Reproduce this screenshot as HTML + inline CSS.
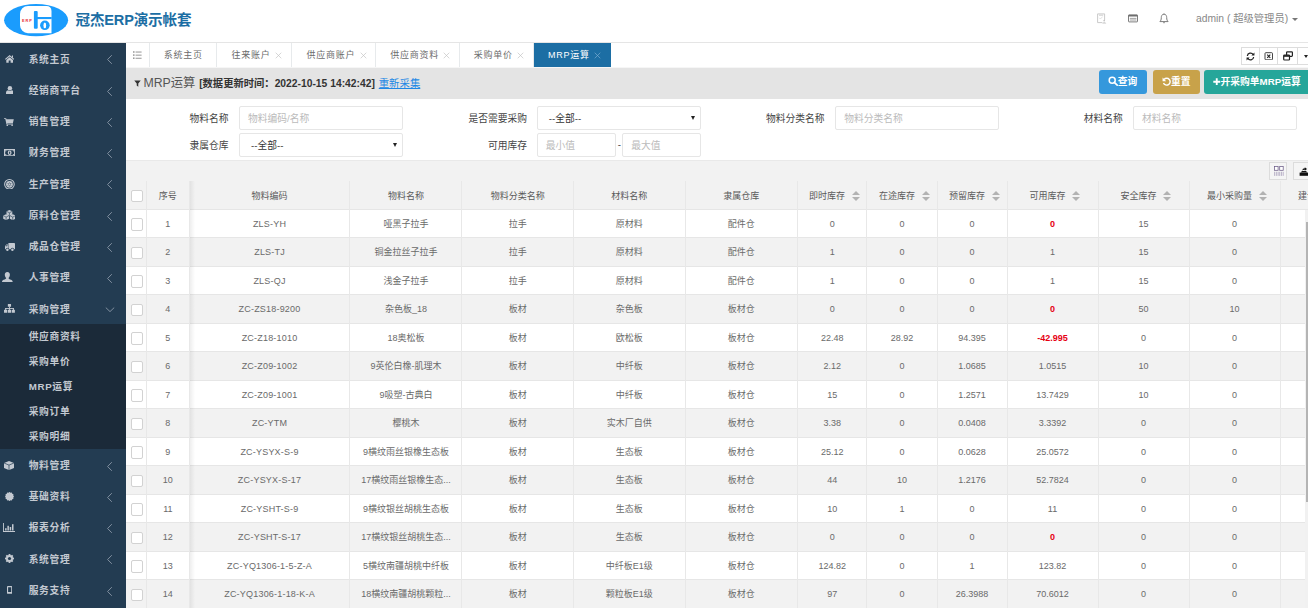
<!DOCTYPE html>
<html lang="zh-CN">
<head>
<meta charset="utf-8">
<title>冠杰ERP演示帐套</title>
<style>
*{box-sizing:border-box;margin:0;padding:0}
html,body{width:1308px;height:608px;overflow:hidden;background:#fff}
body{font-family:"Liberation Sans","Noto Sans CJK SC",sans-serif;font-size:9.75px;color:#676a6c;position:relative}
.abs{position:absolute}
/* header */
#hdr{position:absolute;left:0;top:0;width:1308px;height:43px;background:#fff;border-bottom:1px solid #e5e5e5}
#logo{position:absolute;left:3px;top:2px;width:66px;height:36px}
#title{position:absolute;left:75.5px;top:8.8px;height:22px;line-height:22px;font-size:14.6px;font-weight:bold;color:#1c6ea4;white-space:nowrap;letter-spacing:-0.2px}
#user{position:absolute;left:1196px;top:9.8px;height:18px;line-height:18px;font-size:10.3px;color:#888;white-space:nowrap}
/* sidebar */
#side{position:absolute;left:0;top:43px;width:125.5px;height:565px;background:#233c52}
.mi{position:absolute;left:0;width:125.5px;height:31.25px;line-height:31.25px;color:#c3c9d1;font-size:9.75px;letter-spacing:.65px;font-weight:bold;white-space:nowrap}
.mi .t{position:absolute;left:28.7px;top:0.3px}
.mi svg.ic{position:absolute;left:4px;top:9.6px;width:12px;height:12px}
.mi svg.ar{position:absolute;left:105px;top:11.1px;width:10px;height:11px}
#sub{position:absolute;left:0;top:281.4px;width:125.5px;height:124.8px;background:#1b2a39}
.si{position:absolute;left:28.7px;height:25px;line-height:25.6px;color:#c3c9d1;font-size:9.75px;letter-spacing:.65px;font-weight:bold;white-space:nowrap}
/* tabs */
#tabs{position:absolute;left:125.5px;top:43px;width:1183px;height:25px;background:#fff;border-bottom:1px solid #f6f6f6}
.tab{position:absolute;top:0;height:24px;line-height:25px;border-right:1px solid #e7eaec;color:#6c6c6c;font-size:9px;letter-spacing:.75px;white-space:nowrap;text-align:left;padding-left:14.2px}
.tab .x{display:inline-block;margin-left:4.5px;width:7px;height:7px;vertical-align:-1px}
.tab.act{background:#1c6ea4;color:#fff;border-right:none;height:23.5px}
#tabr{position:absolute;left:1241.1px;top:47px;width:70px;height:18px;border:1px solid #ddd;background:#fff}
#tabr div{position:absolute;top:0;height:16px;border-right:1px solid #ddd}
/* panel heading */
#ph{position:absolute;left:125.5px;top:68px;width:1183px;height:31px;background:#e4e4e4}
#ph .h{position:absolute;left:7px;top:-0.5px;height:32px;line-height:31px;white-space:nowrap;color:#444}
#ph .h b.t1{font-weight:normal;font-size:12.3px;color:#555;margin-left:11px;margin-right:1px}
#ph .h b.t2{font-size:10.3px;color:#333}
#ph .h a{font-size:10.4px;margin-left:1.2px;color:#1e88e5;text-decoration:underline}
.btn{position:absolute;top:1.7px;height:24.3px;line-height:24px;border-radius:3px;color:#fff;font-size:9.75px;text-align:center;white-space:nowrap;font-weight:bold}
/* form */
#form{position:absolute;left:125.5px;top:99px;width:1183px;height:61px;background:#fff}
.lb{position:absolute;height:24px;line-height:25.6px;font-size:9.75px;color:#444;text-align:right;width:100px;white-space:nowrap}
.ip{position:absolute;height:24px;line-height:23.4px;border:1px solid #e6e6e6;border-radius:2px;background:#fff;font-size:9.75px;color:#bbb;padding-left:8px;white-space:nowrap}
.ip.sel{color:#333;padding-left:11px}
.ip.sel:after{content:"";position:absolute;right:4.6px;top:8.6px;border:2.6px solid transparent;border-top:4.4px solid #222;}
/* table toolbar */
#tb{position:absolute;left:125.5px;top:160px;width:1183px;height:21.5px;background:#f2f2f2;border-top:1px solid #e9e9e9;border-bottom:1px solid #e6e6e6}
.tbi{position:absolute;top:1.3px;width:18px;height:17.4px;border:1px solid #dcdcdc;background:#f5f5f5}
/* table */
#tbl{position:absolute;left:126px;top:181.4px;width:1182px;height:427px;overflow:hidden}
.tr{position:absolute;left:0;width:1182px;height:28.5px;background:#fff;border-bottom:1px solid #e6e6e6}
.tr.even,.tr.th{background:#f2f2f2}
.c{position:absolute;top:0;height:28.5px;line-height:29.6px;text-align:center;border-right:1px solid #e8e8e8;font-size:9px;color:#6a6a6a;white-space:nowrap;overflow:hidden}
.th .c{color:#5a5a5a;line-height:31.4px}
.c.code{letter-spacing:.2px}
.c.red{color:#e60012;font-weight:bold}
.cb{position:absolute;left:4.5px;top:8.5px;width:12.5px;height:12.5px;border:1px solid #d2d2d2;border-radius:2px;background:#fff}
.c.hs{padding-left:5px}
.sort{display:inline-block;position:relative;width:8.4px;height:10px;margin-left:6.8px;vertical-align:-1.6px}
.sort i{position:absolute;left:0;border:4.2px solid transparent}
.sort i.up{top:0.2px;border-bottom:4px solid #b2b2b2;border-top:none}
.sort i.dn{top:5.7px;border-top:4px solid #b2b2b2;border-bottom:none}
#fixshadow{position:absolute;left:189.5px;top:181px;width:5px;height:427px;background:linear-gradient(to right,rgba(0,0,0,.065),rgba(0,0,0,0))}
#vsb{position:absolute;left:1305.2px;top:209.8px;width:3px;height:399px;background:#f1f1f1}
#vsb i{position:absolute;left:1.3px;top:12.2px;width:2px;height:280px;background:#b4b4b4}
</style>
</head>
<body>
<!-- HEADER -->
<div id="hdr">
  <svg id="logo" viewBox="0 0 66 36">
    <ellipse cx="33.1" cy="18.2" rx="32" ry="16.1" fill="#1a9cfd"/>
    <path d="M25 3.9 H43.5 A5 5 0 0 1 48.5 8.9 V31.2 H25 A8 8 0 0 1 17 23.2 V11.9 A8 8 0 0 1 25 3.9 Z" fill="#fff"/>
    <text x="18.9" y="20" font-family="Liberation Sans, sans-serif" font-size="3.9" font-weight="bold" letter-spacing="0.95" fill="#e8303a">ERP</text>
    <rect x="30.9" y="9" width="3.8" height="17.8" rx="1" fill="#1a9cfd"/>
    <rect x="31.5" y="15" width="17.2" height="2.1" fill="#1a9cfd"/>
    <circle cx="41.9" cy="23.3" r="4.8" fill="#1a9cfd"/>
    <ellipse cx="41.8" cy="23.4" rx="1.35" ry="2.9" fill="#fff"/>
  </svg>
  <div id="title">冠杰ERP演示帐套</div>
  <div id="user">admin ( 超级管理员)</div>
  <svg class="abs" style="left:1097px;top:13px;width:10px;height:11px" viewBox="0 0 10 11"><path d="M0.6 0.9 H7.6 V7 M5.4 9.6 H0.6 V0.9" fill="none" stroke="#c4c4c4" stroke-width="0.9"/><path d="M2 2.2 H6.2" stroke="#c4c4c4" stroke-width="0.8"/><path d="M2.2 4.8 L3.4 6 L5.6 3.6" fill="none" stroke="#d5d5d5" stroke-width="0.7"/><circle cx="7.2" cy="7.6" r="0.9" fill="#c4c4c4"/><path d="M5.2 10.4 Q7.2 8 9.4 10.4 Z" fill="#c4c4c4"/></svg>
  <svg class="abs" style="left:1128px;top:14px;width:10px;height:9px" viewBox="0 0 10 9"><rect x="0.5" y="0.9" width="9" height="7" rx="0.5" fill="none" stroke="#6e6e6e" stroke-width="0.9"/><rect x="0.5" y="0.9" width="9" height="1.6" fill="#6e6e6e"/><rect x="1.8" y="3.9" width="6.6" height="0.8" fill="#8a8a8a"/><rect x="1.8" y="5.6" width="6.6" height="0.8" fill="#8a8a8a"/></svg>
  <svg class="abs" style="left:1158.9px;top:12.5px;width:10px;height:12px" viewBox="0 0 10 12"><path d="M5 1.2 C2.9 1.2 2.3 3 2.3 4.6 C2.3 6.8 1.7 7.8 0.9 8.6 H9.1 C8.3 7.8 7.7 6.8 7.7 4.6 C7.7 3 7.1 1.2 5 1.2 Z" fill="none" stroke="#7c7c7c" stroke-width="1" stroke-linejoin="round"/><path d="M4 9.3 Q5 10.8 6 9.3" fill="none" stroke="#8c8c8c" stroke-width="0.9"/><path d="M5 0.4 V1.2" stroke="#8c8c8c" stroke-width="0.9"/></svg>
  <div class="abs" style="left:1291.8px;top:17.5px;border:3px solid transparent;border-top:3.2px solid #777;border-bottom:none"></div>
</div>

<!-- SIDEBAR -->
<div id="side">
<svg viewBox="0 0 9.3 7.8" style="position:absolute;left:4.8px;top:12px;width:9.3px;height:7.8px"><g fill="#c3c9d1"><path d="M4.65 0 L9.3 3.9 L8.6 4.7 L4.65 1.4 L0.7 4.7 L0 3.9 Z"/><path d="M4.65 2.2 L8 5 V7.8 H5.6 V5.4 H3.7 V7.8 H1.3 V5 Z"/><rect x="6.9" y="0.5" width="1.1" height="2.2"/></g></svg>
<div class="mi" style="top:0.3px"><span class="t">系统主页</span><svg class="ar" viewBox="0 0 10 11"><path d="M6.8 1.2 L2.6 5.5 L6.8 9.8" fill="none" stroke="#8b98a8" stroke-width="0.9"/></svg></div>
<svg viewBox="0 0 7.8 8.7" style="position:absolute;left:5.6px;top:42.8px;width:7.8px;height:8.7px"><g fill="#c3c9d1"><circle cx="3.9" cy="2.3" r="2.25"/><path d="M0 8.2 V6.6 Q0 4.6 2 4.2 Q3.9 5.6 5.8 4.2 Q7.8 4.6 7.8 6.6 V8.2 Q7.8 8.7 7.2 8.7 H0.6 Q0 8.7 0 8.2 Z"/></g></svg>
<div class="mi" style="top:31.55px"><span class="t">经销商平台</span><svg class="ar" viewBox="0 0 10 11"><path d="M6.8 1.2 L2.6 5.5 L6.8 9.8" fill="none" stroke="#8b98a8" stroke-width="0.9"/></svg></div>
<svg viewBox="0 0 9.8 8.1" style="position:absolute;left:4.3px;top:75px;width:9.8px;height:8.1px"><g fill="#c3c9d1"><path d="M0 0.2 H2.1 L2.5 1.2 H9.8 L8.9 4.9 H3.2 L3.4 5.6 H9 V6.5 H2.5 L1.3 1.1 H0 Z"/><circle cx="3.3" cy="7.3" r="0.8"/><circle cx="8.1" cy="7.3" r="0.8"/></g></svg>
<div class="mi" style="top:62.8px"><span class="t">销售管理</span><svg class="ar" viewBox="0 0 10 11"><path d="M6.8 1.2 L2.6 5.5 L6.8 9.8" fill="none" stroke="#8b98a8" stroke-width="0.9"/></svg></div>
<svg viewBox="0 0 11.3 7.5" style="position:absolute;left:3.7px;top:105.8px;width:11.3px;height:7.5px"><g fill="#c3c9d1"><path d="M0 0 H11.3 V7.5 H0 Z M1.2 1.2 V6.3 H10.1 V1.2 Z" fill-rule="evenodd"/><path d="M5.65 1.5 A1.9 2.25 0 1 0 5.65 6 A1.9 2.25 0 1 0 5.65 1.5 Z M5.65 2.4 A0.6 1.35 0 1 1 5.65 5.1 A0.6 1.35 0 1 1 5.65 2.4 Z" fill-rule="evenodd"/><path d="M1.2 1.2 H2.6 A1.4 1.4 0 0 1 1.2 2.6 Z M10.1 1.2 V2.6 A1.4 1.4 0 0 1 8.7 1.2 Z M1.2 6.3 V4.9 A1.4 1.4 0 0 1 2.6 6.3 Z M10.1 6.3 H8.7 A1.4 1.4 0 0 1 10.1 4.9 Z"/></g></svg>
<div class="mi" style="top:94.05px"><span class="t">财务管理</span><svg class="ar" viewBox="0 0 10 11"><path d="M6.8 1.2 L2.6 5.5 L6.8 9.8" fill="none" stroke="#8b98a8" stroke-width="0.9"/></svg></div>
<svg viewBox="0 0 10.9 10.7" style="position:absolute;left:4.1px;top:135.7px;width:10.9px;height:10.7px"><g fill="#c3c9d1"><circle cx="5.45" cy="5.35" r="4.8" fill="none" stroke="#c3c9d1" stroke-width="1.1"/><circle cx="5.45" cy="5.35" r="3.35"/><g fill="#233c52"><polygon points="5.45,2.65 5.90,4.57 7.79,4.00 6.35,5.35 7.79,6.70 5.90,6.13 5.45,8.05 5.00,6.13 3.11,6.70 4.55,5.35 3.11,4.00 5.00,4.57"/></g><circle cx="5.45" cy="5.35" r="1.1" /></g></svg>
<div class="mi" style="top:125.3px"><span class="t">生产管理</span><svg class="ar" viewBox="0 0 10 11"><path d="M6.8 1.2 L2.6 5.5 L6.8 9.8" fill="none" stroke="#8b98a8" stroke-width="0.9"/></svg></div>
<svg viewBox="0 0 12.8 10.2" style="position:absolute;left:2.7px;top:167px;width:12.8px;height:10.2px"><g fill="#c3c9d1"><polygon points="6.4,0 9.3,1.305 9.3,4.408 6.4,5.8 3.5,4.408 3.5,1.305"/><path d="M6.4 2.8 V5.8 M6.4 2.8 L3.5 1.305 M6.4 2.8 L9.3 1.305" stroke="#233c52" stroke-width="0.6" fill="none"/><polygon points="3.1,4.3 6,5.605 6,8.708 3.1,10.1 0.2,8.708 0.2,5.605"/><path d="M3.1 7.1 V10.1 M3.1 7.1 L0.2 5.605 M3.1 7.1 L6 5.605" stroke="#233c52" stroke-width="0.6" fill="none"/><polygon points="9.7,4.3 12.6,5.605 12.6,8.708 9.7,10.1 6.8,8.708 6.8,5.605"/><path d="M9.7 7.1 V10.1 M9.7 7.1 L6.8 5.605 M9.7 7.1 L12.6 5.605" stroke="#233c52" stroke-width="0.6" fill="none"/></g></svg>
<div class="mi" style="top:156.55px"><span class="t">原料仓管理</span><svg class="ar" viewBox="0 0 10 11"><path d="M6.8 1.2 L2.6 5.5 L6.8 9.8" fill="none" stroke="#8b98a8" stroke-width="0.9"/></svg></div>
<svg viewBox="0 0 10 8.1" style="position:absolute;left:4.5px;top:199.8px;width:10px;height:8.1px"><g fill="#c3c9d1"><rect x="3.4" y="0" width="6.6" height="6.2" rx="0.4"/><path d="M0 3.3 L1.3 1.5 H3 V6.2 H0 Z"/><path d="M0.8 3.3 L1.7 2.1 H2.4 V3.3 Z" fill="#233c52"/><circle cx="2.4" cy="6.6" r="1.75" fill="#233c52"/><circle cx="7.4" cy="6.6" r="1.75" fill="#233c52"/><circle cx="2.4" cy="6.7" r="1.25"/><circle cx="7.4" cy="6.7" r="1.25"/></g></svg>
<div class="mi" style="top:187.8px"><span class="t">成品仓管理</span><svg class="ar" viewBox="0 0 10 11"><path d="M6.8 1.2 L2.6 5.5 L6.8 9.8" fill="none" stroke="#8b98a8" stroke-width="0.9"/></svg></div>
<svg viewBox="0 0 10.7 10.3" style="position:absolute;left:2.4px;top:228.9px;width:10.7px;height:10.3px"><g fill="#c3c9d1"><path d="M5.35 0 C7.3 0 7.9 1.5 7.9 2.8 C7.9 4.3 7.1 5.6 6.5 6 C6.5 7 7.5 7.2 9.1 7.8 C10.5 8.3 10.7 9.2 10.7 10.3 H0 C0 9.2 0.2 8.3 1.6 7.8 C3.2 7.2 4.2 7 4.2 6 C3.6 5.6 2.8 4.3 2.8 2.8 C2.8 1.5 3.4 0 5.35 0 Z"/></g></svg>
<div class="mi" style="top:219.05px"><span class="t">人事管理</span><svg class="ar" viewBox="0 0 10 11"><path d="M6.8 1.2 L2.6 5.5 L6.8 9.8" fill="none" stroke="#8b98a8" stroke-width="0.9"/></svg></div>
<svg viewBox="0 0 10.9 8.7" style="position:absolute;left:4.1px;top:261.4px;width:10.9px;height:8.7px"><g fill="#c3c9d1"><rect x="3.85" y="0" width="3.2" height="2.7" rx="0.3"/><rect x="5" y="2.5" width="0.9" height="2"/><rect x="1.2" y="4" width="8.5" height="0.9"/><rect x="1.2" y="4" width="0.9" height="2"/><rect x="9.0" y="4" width="0.9" height="2"/><rect x="5" y="4" width="0.9" height="2"/><rect x="0" y="5.7" width="3.2" height="3" rx="0.3"/><rect x="3.85" y="5.7" width="3.2" height="3" rx="0.3"/><rect x="7.7" y="5.7" width="3.2" height="3" rx="0.3"/></g></svg>
<div class="mi" style="top:250.3px"><span class="t">采购管理</span><svg class="ar" viewBox="0 0 10 11"><path d="M0.8 3.6 L5 7.6 L9.2 3.6" fill="none" stroke="#8b98a8" stroke-width="0.9"/></svg></div>
<svg viewBox="0 0 10 9.1" style="position:absolute;left:4.1px;top:417.8px;width:10px;height:9.1px"><g fill="#c3c9d1"><polygon points="5,0 10,2 10,6.9 5,9.1 0,6.9 0,2"/><path d="M5 4.1 V9.1 M5 4.1 L0 2 M5 4.1 L10 2" stroke="#233c52" stroke-width="0.7" fill="none"/></g></svg>
<div class="mi" style="top:406.55px"><span class="t">物料管理</span><svg class="ar" viewBox="0 0 10 11"><path d="M6.8 1.2 L2.6 5.5 L6.8 9.8" fill="none" stroke="#8b98a8" stroke-width="0.9"/></svg></div>
<svg viewBox="0 0 9 9" style="position:absolute;left:5px;top:448.6px;width:9px;height:9px"><g fill="#c3c9d1"><polygon points="4.50,-0.10 5.51,0.73 6.80,0.52 7.26,1.74 8.48,2.20 8.27,3.49 9.10,4.50 8.27,5.51 8.48,6.80 7.26,7.26 6.80,8.48 5.51,8.27 4.50,9.10 3.49,8.27 2.20,8.48 1.74,7.26 0.52,6.80 0.73,5.51 -0.10,4.50 0.73,3.49 0.52,2.20 1.74,1.74 2.20,0.52 3.49,0.73"/></g></svg>
<div class="mi" style="top:437.8px"><span class="t">基础资料</span><svg class="ar" viewBox="0 0 10 11"><path d="M6.8 1.2 L2.6 5.5 L6.8 9.8" fill="none" stroke="#8b98a8" stroke-width="0.9"/></svg></div>
<svg viewBox="0 0 12 9" style="position:absolute;left:3px;top:479.95px;width:12px;height:9px"><g fill="#c3c9d1"><path d="M0 0 H0.9 V8.1 H12 V9 H0 Z"/><rect x="2.1" y="5.2" width="1.5" height="2.3"/><rect x="4.4" y="2.8" width="1.5" height="4.7"/><rect x="6.7" y="4" width="1.5" height="3.5"/><rect x="9" y="1.2" width="1.5" height="6.3"/></g></svg>
<div class="mi" style="top:469.05px"><span class="t">报表分析</span><svg class="ar" viewBox="0 0 10 11"><path d="M6.8 1.2 L2.6 5.5 L6.8 9.8" fill="none" stroke="#8b98a8" stroke-width="0.9"/></svg></div>
<svg viewBox="0 0 9 9" style="position:absolute;left:4.8px;top:511.35px;width:9px;height:9px"><g fill="#c3c9d1"><rect x="3.6" y="0" width="1.8" height="9" transform="rotate(0 4.5 4.5)"/><rect x="3.6" y="0" width="1.8" height="9" transform="rotate(45 4.5 4.5)"/><rect x="3.6" y="0" width="1.8" height="9" transform="rotate(90 4.5 4.5)"/><rect x="3.6" y="0" width="1.8" height="9" transform="rotate(135 4.5 4.5)"/><circle cx="4.5" cy="4.5" r="3.5"/><circle cx="4.5" cy="4.5" r="1.6" fill="#233c52"/></g></svg>
<div class="mi" style="top:500.3px"><span class="t">系统管理</span><svg class="ar" viewBox="0 0 10 11"><path d="M6.8 1.2 L2.6 5.5 L6.8 9.8" fill="none" stroke="#8b98a8" stroke-width="0.9"/></svg></div>
<svg viewBox="0 0 5.3 7.8" style="position:absolute;left:6.8px;top:542.95px;width:5.3px;height:7.8px"><g fill="#c3c9d1"><path d="M0.9 0 H4.4 Q5.3 0 5.3 0.9 V6.9 Q5.3 7.8 4.4 7.8 H0.9 Q0 7.8 0 6.9 V0.9 Q0 0 0.9 0 Z M1.1 1.3 V6 H4.2 V1.3 Z" fill-rule="evenodd"/></g></svg>
<div class="mi" style="top:531.55px"><span class="t">服务支持</span><svg class="ar" viewBox="0 0 10 11"><path d="M6.8 1.2 L2.6 5.5 L6.8 9.8" fill="none" stroke="#8b98a8" stroke-width="0.9"/></svg></div>
<div id="sub" style="top:281.3px"><div class="si" style="top:0px">供应商资料</div><div class="si" style="top:24.85px">采购单价</div><div class="si" style="top:49.7px">MRP运算</div><div class="si" style="top:74.55px">采购订单</div><div class="si" style="top:99.4px">采购明细</div></div>
</div>

<!-- TABS -->
<div id="tabs">
<div class="tab" style="left:0.5px;width:23.5px"><svg viewBox="0 0 10 10" style="position:absolute;left:7.3px;top:7.6px;width:8.6px;height:8.6px"><g fill="#858585"><rect x="0" y="0.4" width="1.8" height="1.5"/><rect x="0" y="4" width="1.8" height="1.5"/><rect x="0" y="7.6" width="1.8" height="1.5"/><rect x="3" y="0.7" width="7" height="1"/><rect x="3" y="4.3" width="7" height="1"/><rect x="3" y="7.9" width="7" height="1"/></g></svg></div>
<div class="tab" style="left:24px;width:67.9px">系统主页</div>
<div class="tab" style="left:91.9px;width:74.8px">往来账户<svg class="x" viewBox="0 0 8 8"><path d="M0.8 0.8 L7.2 7.2 M7.2 0.8 L0.8 7.2" stroke="#c2c2c2" stroke-width="0.75" fill="none"/></svg></div>
<div class="tab" style="left:166.7px;width:83.8px">供应商账户<svg class="x" viewBox="0 0 8 8"><path d="M0.8 0.8 L7.2 7.2 M7.2 0.8 L0.8 7.2" stroke="#c2c2c2" stroke-width="0.75" fill="none"/></svg></div>
<div class="tab" style="left:250.5px;width:83.5px">供应商资料<svg class="x" viewBox="0 0 8 8"><path d="M0.8 0.8 L7.2 7.2 M7.2 0.8 L0.8 7.2" stroke="#c2c2c2" stroke-width="0.75" fill="none"/></svg></div>
<div class="tab" style="left:334px;width:74.25px">采购单价<svg class="x" viewBox="0 0 8 8"><path d="M0.8 0.8 L7.2 7.2 M7.2 0.8 L0.8 7.2" stroke="#c2c2c2" stroke-width="0.75" fill="none"/></svg></div>
<div class="tab act" style="left:408.25px;width:77.25px">MRP运算<svg class="x" viewBox="0 0 8 8"><path d="M0.8 0.8 L7.2 7.2 M7.2 0.8 L0.8 7.2" stroke="#7fb0d2" stroke-width="0.75" fill="none"/></svg></div>
</div>
<div id="tabr">
  <div style="left:0;width:17.8px"><svg viewBox="0 0 10 10" style="position:absolute;left:4.2px;top:3.6px;width:9px;height:9px"><path d="M1.5 4.4 A3.5 3.5 0 0 1 8 3" fill="none" stroke="#222" stroke-width="1.4"/><path d="M8.5 5.6 A3.5 3.5 0 0 1 2 7" fill="none" stroke="#222" stroke-width="1.4"/><path d="M9.4 0.6 V4 H6 Z" fill="#222"/><path d="M0.6 9.4 V6 H4 Z" fill="#222"/></svg></div>
  <div style="left:17.8px;width:18.2px"><svg viewBox="0 0 10 10" style="position:absolute;left:4.2px;top:3.8px;width:9.5px;height:8.5px"><rect x="0.6" y="0.8" width="8.8" height="8.4" rx="1" fill="none" stroke="#222" stroke-width="1"/><path d="M3.2 3.2 L6.8 6.8 M6.8 3.2 L3.2 6.8" stroke="#222" stroke-width="1.3"/></svg></div>
  <div style="left:36px;width:19.5px"><svg viewBox="0 0 10 10" style="position:absolute;left:4.5px;top:3.2px;width:10px;height:10px"><rect x="3.6" y="0.8" width="5.8" height="4.6" rx="0.8" fill="none" stroke="#222" stroke-width="1.2"/><rect x="0.7" y="4.2" width="5.8" height="4.8" rx="0.8" fill="#fff" stroke="#222" stroke-width="1.2"/><rect x="0.7" y="4.2" width="5.8" height="1.6" fill="#222"/></svg></div>
  <div style="left:55.5px;width:14px;border-right:none"><i style="position:absolute;left:6px;top:7px;border:2.6px solid transparent;border-top:3px solid #222;border-bottom:none"></i></div>
</div>

<!-- PANEL HEADING -->
<div id="ph">
  <div class="h"><svg viewBox="0 0 8 8" style="position:absolute;left:1px;top:12.5px;width:7px;height:7px"><path d="M0.3 0.6 H7.7 L4.9 3.9 V7.6 L3.1 6.3 V3.9 Z" fill="#333"/></svg><b class="t1">MRP运算</b> <b class="t2">[数据更新时间：2022-10-15 14:42:42]</b> <a>重新采集</a></div>
  <div class="btn" style="left:973.5px;width:47.8px;background:#3598dc"><svg viewBox="0 0 10 10" style="width:10px;height:10px;vertical-align:-1.6px;margin-left:-1px"><circle cx="4.2" cy="4.2" r="3" fill="none" stroke="#fff" stroke-width="1.5"/><path d="M6.3 6.3 L9.2 9.2" stroke="#fff" stroke-width="1.7" stroke-linecap="round"/></svg>查询</div>
  <div class="btn" style="left:1027.6px;width:46.9px;background:#c8a24a"><svg viewBox="0 0 10 10" style="width:9.5px;height:9.5px;vertical-align:-1.4px;margin-left:-1px"><path d="M2.2 2.6 A3.6 3.6 0 1 1 1.6 6.3" fill="none" stroke="#fff" stroke-width="1.5"/><path d="M0.6 0.6 V4.4 H4.4 Z" fill="#fff"/></svg>重置</div>
  <div class="btn" style="left:1078.3px;width:110px;background:#26a69a;text-align:left;padding-left:9.3px"><svg viewBox="0 0 8 8" style="width:7.5px;height:7.5px;vertical-align:-0.6px"><path d="M3 0.3 H5 V3 H7.7 V5 H5 V7.7 H3 V5 H0.3 V3 H3 Z" fill="#fff"/></svg>开采购单MRP运算</div>
</div>

<!-- FORM -->
<div id="form">
<div class="lb" style="left:3px;top:7px">物料名称</div>
<div class="ip" style="left:113.5px;top:7px;width:163.7px">物料编码/名称</div>
<div class="lb" style="left:301.5px;top:7px">是否需要采购</div>
<div class="ip sel" style="left:411.2px;top:7px;width:164px">--全部--</div>
<div class="lb" style="left:599px;top:7px">物料分类名称</div>
<div class="ip" style="left:709.8px;top:7px;width:163.7px">物料分类名称</div>
<div class="lb" style="left:897.2px;top:7px">材料名称</div>
<div class="ip" style="left:1007.5px;top:7px;width:164px">材料名称</div>
<div class="lb" style="left:3px;top:34px">隶属仓库</div>
<div class="ip sel" style="left:113.5px;top:34px;width:163.7px">--全部--</div>
<div class="lb" style="left:301.5px;top:34px">可用库存</div>
<div class="ip" style="left:411.2px;top:34px;width:79px">最小值</div>
<div class="ip" style="left:496.8px;top:34px;width:78.4px">最大值</div>
<div class="abs" style="left:492.3px;top:34px;height:24px;line-height:24px;color:#333">-</div>
</div>

<!-- TABLE TOOLBAR -->
<div id="tb">
  <div class="tbi" style="left:1143px"><svg viewBox="0 0 10 10" style="position:absolute;left:4px;top:3px;width:10px;height:10px"><rect x="0.6" y="0.4" width="3.5" height="3.9" fill="#fff" stroke="#6b5b86" stroke-width="0.75"/><rect x="5.7" y="0.4" width="3.5" height="3.9" fill="#fff" stroke="#6b5b86" stroke-width="0.75"/><path d="M0.6 5.8 V9.9 M2.35 5.8 V9.9 M4.1 5.8 V9.9 M5.7 5.8 V9.9 M7.45 5.8 V9.9 M9.2 5.8 V9.9" stroke="#a79cba" stroke-width="0.75"/></svg></div>
  <div class="tbi" style="left:1167.9px"><svg viewBox="0 0 10 10" style="position:absolute;left:5px;top:4px;width:10px;height:10px"><path d="M0.6 5.6 H9.4 V8.8 H0.6 Z" fill="#111"/><path d="M1.6 5.6 L3 4 H7 L8.4 5.6 Z" fill="#111"/><path d="M3.2 3.6 Q3.4 1.3 5.8 1.3 V0.2 L8 2 L5.8 3.8 V2.7 Q4.2 2.6 3.2 3.6 Z" fill="#111"/></svg></div>
</div>

<!-- TABLE -->
<div id="tbl">
<div class="tr th" style="top:0"><div class="c " style="left:0px;width:21px"><span class="cb"></span></div><div class="c " style="left:21px;width:42.6px">序号</div><div class="c " style="left:63.6px;width:160.9px">物料编码</div><div class="c " style="left:224.5px;width:111.9px">物料名称</div><div class="c " style="left:336.4px;width:111.6px">物料分类名称</div><div class="c " style="left:448px;width:111.6px">材料名称</div><div class="c " style="left:559.6px;width:112.2px">隶属仓库</div><div class="c hs" style="left:671.8px;width:69.7px"><span>即时库存</span><span class="sort"><i class="up"></i><i class="dn"></i></span></div><div class="c hs" style="left:741.5px;width:70px"><span>在途库存</span><span class="sort"><i class="up"></i><i class="dn"></i></span></div><div class="c hs" style="left:811.5px;width:70px"><span>预留库存</span><span class="sort"><i class="up"></i><i class="dn"></i></span></div><div class="c hs" style="left:881.5px;width:91px"><span>可用库存</span><span class="sort"><i class="up"></i><i class="dn"></i></span></div><div class="c hs" style="left:972.5px;width:91px"><span>安全库存</span><span class="sort"><i class="up"></i><i class="dn"></i></span></div><div class="c hs" style="left:1063.5px;width:91px"><span>最小采购量</span><span class="sort"><i class="up"></i><i class="dn"></i></span></div><div class="c hs last" style="left:1154.5px;width:91px"><span>建议采购量</span><span class="sort"><i class="up"></i><i class="dn"></i></span></div></div>
<div class="tr " style="top:28.5px"><div class="c " style="left:0px;width:21px"><span class="cb"></span></div><div class="c " style="left:21px;width:42.6px">1</div><div class="c  code" style="left:63.6px;width:160.9px">ZLS-YH</div><div class="c " style="left:224.5px;width:111.9px">哑黑子拉手</div><div class="c " style="left:336.4px;width:111.6px">拉手</div><div class="c " style="left:448px;width:111.6px">原材料</div><div class="c " style="left:559.6px;width:112.2px">配件仓</div><div class="c " style="left:671.8px;width:69.7px">0</div><div class="c " style="left:741.5px;width:70px">0</div><div class="c " style="left:811.5px;width:70px">0</div><div class="c red" style="left:881.5px;width:91px">0</div><div class="c " style="left:972.5px;width:91px">15</div><div class="c " style="left:1063.5px;width:91px">0</div><div class="c " style="left:1154.5px;width:91px"></div></div>
<div class="tr even" style="top:57px"><div class="c " style="left:0px;width:21px"><span class="cb"></span></div><div class="c " style="left:21px;width:42.6px">2</div><div class="c  code" style="left:63.6px;width:160.9px">ZLS-TJ</div><div class="c " style="left:224.5px;width:111.9px">铜金拉丝子拉手</div><div class="c " style="left:336.4px;width:111.6px">拉手</div><div class="c " style="left:448px;width:111.6px">原材料</div><div class="c " style="left:559.6px;width:112.2px">配件仓</div><div class="c " style="left:671.8px;width:69.7px">1</div><div class="c " style="left:741.5px;width:70px">0</div><div class="c " style="left:811.5px;width:70px">0</div><div class="c " style="left:881.5px;width:91px">1</div><div class="c " style="left:972.5px;width:91px">15</div><div class="c " style="left:1063.5px;width:91px">0</div><div class="c " style="left:1154.5px;width:91px"></div></div>
<div class="tr " style="top:85.5px"><div class="c " style="left:0px;width:21px"><span class="cb"></span></div><div class="c " style="left:21px;width:42.6px">3</div><div class="c  code" style="left:63.6px;width:160.9px">ZLS-QJ</div><div class="c " style="left:224.5px;width:111.9px">浅金子拉手</div><div class="c " style="left:336.4px;width:111.6px">拉手</div><div class="c " style="left:448px;width:111.6px">原材料</div><div class="c " style="left:559.6px;width:112.2px">配件仓</div><div class="c " style="left:671.8px;width:69.7px">1</div><div class="c " style="left:741.5px;width:70px">0</div><div class="c " style="left:811.5px;width:70px">0</div><div class="c " style="left:881.5px;width:91px">1</div><div class="c " style="left:972.5px;width:91px">15</div><div class="c " style="left:1063.5px;width:91px">0</div><div class="c " style="left:1154.5px;width:91px"></div></div>
<div class="tr even" style="top:114px"><div class="c " style="left:0px;width:21px"><span class="cb"></span></div><div class="c " style="left:21px;width:42.6px">4</div><div class="c  code" style="left:63.6px;width:160.9px">ZC-ZS18-9200</div><div class="c " style="left:224.5px;width:111.9px">杂色板_18</div><div class="c " style="left:336.4px;width:111.6px">板材</div><div class="c " style="left:448px;width:111.6px">杂色板</div><div class="c " style="left:559.6px;width:112.2px">板材仓</div><div class="c " style="left:671.8px;width:69.7px">0</div><div class="c " style="left:741.5px;width:70px">0</div><div class="c " style="left:811.5px;width:70px">0</div><div class="c red" style="left:881.5px;width:91px">0</div><div class="c " style="left:972.5px;width:91px">50</div><div class="c " style="left:1063.5px;width:91px">10</div><div class="c " style="left:1154.5px;width:91px"></div></div>
<div class="tr " style="top:142.5px"><div class="c " style="left:0px;width:21px"><span class="cb"></span></div><div class="c " style="left:21px;width:42.6px">5</div><div class="c  code" style="left:63.6px;width:160.9px">ZC-Z18-1010</div><div class="c " style="left:224.5px;width:111.9px">18奥松板</div><div class="c " style="left:336.4px;width:111.6px">板材</div><div class="c " style="left:448px;width:111.6px">欧松板</div><div class="c " style="left:559.6px;width:112.2px">板材仓</div><div class="c " style="left:671.8px;width:69.7px">22.48</div><div class="c " style="left:741.5px;width:70px">28.92</div><div class="c " style="left:811.5px;width:70px">94.395</div><div class="c red" style="left:881.5px;width:91px">-42.995</div><div class="c " style="left:972.5px;width:91px">0</div><div class="c " style="left:1063.5px;width:91px">0</div><div class="c " style="left:1154.5px;width:91px"></div></div>
<div class="tr even" style="top:171px"><div class="c " style="left:0px;width:21px"><span class="cb"></span></div><div class="c " style="left:21px;width:42.6px">6</div><div class="c  code" style="left:63.6px;width:160.9px">ZC-Z09-1002</div><div class="c " style="left:224.5px;width:111.9px">9英伦白橡-肌理木</div><div class="c " style="left:336.4px;width:111.6px">板材</div><div class="c " style="left:448px;width:111.6px">中纤板</div><div class="c " style="left:559.6px;width:112.2px">板材仓</div><div class="c " style="left:671.8px;width:69.7px">2.12</div><div class="c " style="left:741.5px;width:70px">0</div><div class="c " style="left:811.5px;width:70px">1.0685</div><div class="c " style="left:881.5px;width:91px">1.0515</div><div class="c " style="left:972.5px;width:91px">10</div><div class="c " style="left:1063.5px;width:91px">0</div><div class="c " style="left:1154.5px;width:91px"></div></div>
<div class="tr " style="top:199.5px"><div class="c " style="left:0px;width:21px"><span class="cb"></span></div><div class="c " style="left:21px;width:42.6px">7</div><div class="c  code" style="left:63.6px;width:160.9px">ZC-Z09-1001</div><div class="c " style="left:224.5px;width:111.9px">9吸塑-古典白</div><div class="c " style="left:336.4px;width:111.6px">板材</div><div class="c " style="left:448px;width:111.6px">中纤板</div><div class="c " style="left:559.6px;width:112.2px">板材仓</div><div class="c " style="left:671.8px;width:69.7px">15</div><div class="c " style="left:741.5px;width:70px">0</div><div class="c " style="left:811.5px;width:70px">1.2571</div><div class="c " style="left:881.5px;width:91px">13.7429</div><div class="c " style="left:972.5px;width:91px">10</div><div class="c " style="left:1063.5px;width:91px">0</div><div class="c " style="left:1154.5px;width:91px"></div></div>
<div class="tr even" style="top:228px"><div class="c " style="left:0px;width:21px"><span class="cb"></span></div><div class="c " style="left:21px;width:42.6px">8</div><div class="c  code" style="left:63.6px;width:160.9px">ZC-YTM</div><div class="c " style="left:224.5px;width:111.9px">樱桃木</div><div class="c " style="left:336.4px;width:111.6px">板材</div><div class="c " style="left:448px;width:111.6px">实木厂自供</div><div class="c " style="left:559.6px;width:112.2px">板材仓</div><div class="c " style="left:671.8px;width:69.7px">3.38</div><div class="c " style="left:741.5px;width:70px">0</div><div class="c " style="left:811.5px;width:70px">0.0408</div><div class="c " style="left:881.5px;width:91px">3.3392</div><div class="c " style="left:972.5px;width:91px">0</div><div class="c " style="left:1063.5px;width:91px">0</div><div class="c " style="left:1154.5px;width:91px"></div></div>
<div class="tr " style="top:256.5px"><div class="c " style="left:0px;width:21px"><span class="cb"></span></div><div class="c " style="left:21px;width:42.6px">9</div><div class="c  code" style="left:63.6px;width:160.9px">ZC-YSYX-S-9</div><div class="c " style="left:224.5px;width:111.9px">9横纹雨丝银橡生态板</div><div class="c " style="left:336.4px;width:111.6px">板材</div><div class="c " style="left:448px;width:111.6px">生态板</div><div class="c " style="left:559.6px;width:112.2px">板材仓</div><div class="c " style="left:671.8px;width:69.7px">25.12</div><div class="c " style="left:741.5px;width:70px">0</div><div class="c " style="left:811.5px;width:70px">0.0628</div><div class="c " style="left:881.5px;width:91px">25.0572</div><div class="c " style="left:972.5px;width:91px">0</div><div class="c " style="left:1063.5px;width:91px">0</div><div class="c " style="left:1154.5px;width:91px"></div></div>
<div class="tr even" style="top:285px"><div class="c " style="left:0px;width:21px"><span class="cb"></span></div><div class="c " style="left:21px;width:42.6px">10</div><div class="c  code" style="left:63.6px;width:160.9px">ZC-YSYX-S-17</div><div class="c " style="left:224.5px;width:111.9px">17横纹雨丝银橡生态...</div><div class="c " style="left:336.4px;width:111.6px">板材</div><div class="c " style="left:448px;width:111.6px">生态板</div><div class="c " style="left:559.6px;width:112.2px">板材仓</div><div class="c " style="left:671.8px;width:69.7px">44</div><div class="c " style="left:741.5px;width:70px">10</div><div class="c " style="left:811.5px;width:70px">1.2176</div><div class="c " style="left:881.5px;width:91px">52.7824</div><div class="c " style="left:972.5px;width:91px">0</div><div class="c " style="left:1063.5px;width:91px">0</div><div class="c " style="left:1154.5px;width:91px"></div></div>
<div class="tr " style="top:313.5px"><div class="c " style="left:0px;width:21px"><span class="cb"></span></div><div class="c " style="left:21px;width:42.6px">11</div><div class="c  code" style="left:63.6px;width:160.9px">ZC-YSHT-S-9</div><div class="c " style="left:224.5px;width:111.9px">9横纹银丝胡桃生态板</div><div class="c " style="left:336.4px;width:111.6px">板材</div><div class="c " style="left:448px;width:111.6px">生态板</div><div class="c " style="left:559.6px;width:112.2px">板材仓</div><div class="c " style="left:671.8px;width:69.7px">10</div><div class="c " style="left:741.5px;width:70px">1</div><div class="c " style="left:811.5px;width:70px">0</div><div class="c " style="left:881.5px;width:91px">11</div><div class="c " style="left:972.5px;width:91px">0</div><div class="c " style="left:1063.5px;width:91px">0</div><div class="c " style="left:1154.5px;width:91px"></div></div>
<div class="tr even" style="top:342px"><div class="c " style="left:0px;width:21px"><span class="cb"></span></div><div class="c " style="left:21px;width:42.6px">12</div><div class="c  code" style="left:63.6px;width:160.9px">ZC-YSHT-S-17</div><div class="c " style="left:224.5px;width:111.9px">17横纹银丝胡桃生态...</div><div class="c " style="left:336.4px;width:111.6px">板材</div><div class="c " style="left:448px;width:111.6px">生态板</div><div class="c " style="left:559.6px;width:112.2px">板材仓</div><div class="c " style="left:671.8px;width:69.7px">0</div><div class="c " style="left:741.5px;width:70px">0</div><div class="c " style="left:811.5px;width:70px">0</div><div class="c red" style="left:881.5px;width:91px">0</div><div class="c " style="left:972.5px;width:91px">0</div><div class="c " style="left:1063.5px;width:91px">0</div><div class="c " style="left:1154.5px;width:91px"></div></div>
<div class="tr " style="top:370.5px"><div class="c " style="left:0px;width:21px"><span class="cb"></span></div><div class="c " style="left:21px;width:42.6px">13</div><div class="c  code" style="left:63.6px;width:160.9px">ZC-YQ1306-1-5-Z-A</div><div class="c " style="left:224.5px;width:111.9px">5横纹南疆胡桃中纤板</div><div class="c " style="left:336.4px;width:111.6px">板材</div><div class="c " style="left:448px;width:111.6px">中纤板E1级</div><div class="c " style="left:559.6px;width:112.2px">板材仓</div><div class="c " style="left:671.8px;width:69.7px">124.82</div><div class="c " style="left:741.5px;width:70px">0</div><div class="c " style="left:811.5px;width:70px">1</div><div class="c " style="left:881.5px;width:91px">123.82</div><div class="c " style="left:972.5px;width:91px">0</div><div class="c " style="left:1063.5px;width:91px">0</div><div class="c " style="left:1154.5px;width:91px"></div></div>
<div class="tr even" style="top:399px"><div class="c " style="left:0px;width:21px"><span class="cb"></span></div><div class="c " style="left:21px;width:42.6px">14</div><div class="c  code" style="left:63.6px;width:160.9px">ZC-YQ1306-1-18-K-A</div><div class="c " style="left:224.5px;width:111.9px">18横纹南疆胡桃颗粒...</div><div class="c " style="left:336.4px;width:111.6px">板材</div><div class="c " style="left:448px;width:111.6px">颗粒板E1级</div><div class="c " style="left:559.6px;width:112.2px">板材仓</div><div class="c " style="left:671.8px;width:69.7px">97</div><div class="c " style="left:741.5px;width:70px">0</div><div class="c " style="left:811.5px;width:70px">26.3988</div><div class="c " style="left:881.5px;width:91px">70.6012</div><div class="c " style="left:972.5px;width:91px">0</div><div class="c " style="left:1063.5px;width:91px">0</div><div class="c " style="left:1154.5px;width:91px"></div></div>
</div>
<div id="fixshadow"></div>
<div id="vsb"><i></i></div>
</body>
</html>
